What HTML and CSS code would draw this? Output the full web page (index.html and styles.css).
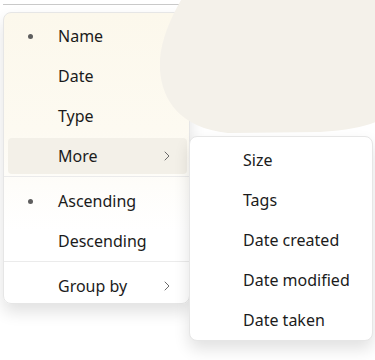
FILE: index.html
```html
<!DOCTYPE html>
<html lang="en">
<head>
    <meta charset="UTF-8">
    <meta name="viewport" content="width=device-width, initial-scale=1.0">
    <title>Sort menu</title>
    <link rel="stylesheet" href="styles.css">
</head>
<body>
    <div class="stage">
        <div class="top-rule"></div>

        <div class="menu main-menu">
            <div class="item"><span class="dot"></span><span class="label">Name</span></div>
            <div class="item"><span class="label">Date</span></div>
            <div class="item"><span class="label">Type</span></div>
            <div class="item hover">
                <span class="label">More</span>
                <svg class="chevron" width="6" height="10" viewBox="0 0 6 10"><path d="M1 1 L5 5 L1 9" fill="none" stroke="#6b6b6b" stroke-width="1" stroke-linecap="round" stroke-linejoin="round"/></svg>
            </div>
            <div class="sep"></div>
            <div class="item"><span class="dot"></span><span class="label">Ascending</span></div>
            <div class="item"><span class="label">Descending</span></div>
            <div class="sep"></div>
            <div class="item">
                <span class="label">Group by</span>
                <svg class="chevron" width="6" height="10" viewBox="0 0 6 10"><path d="M1 1 L5 5 L1 9" fill="none" stroke="#6b6b6b" stroke-width="1" stroke-linecap="round" stroke-linejoin="round"/></svg>
            </div>
        </div>

        <svg class="blob" width="220" height="140" viewBox="160 0 220 140">
            <path d="M184 -5 C170 18 158 46 160 70 C162 100 180 128 228 133 L320 132 C350 130 368 126 380 120 L380 -5 Z" fill="#f4f1ea"/>
        </svg>

        <div class="menu sub-menu">
            <div class="item"><span class="label">Size</span></div>
            <div class="item"><span class="label">Tags</span></div>
            <div class="item"><span class="label">Date created</span></div>
            <div class="item"><span class="label">Date modified</span></div>
            <div class="item"><span class="label">Date taken</span></div>
        </div>
    </div>
</body>
</html>
```

FILE: styles.css
```css
body, html {
    margin: 0;
    padding: 0;
    width: 100%;
    height: 100%;
    background: #ffffff;
    font-family: 'Noto Sans', 'Open Sans', sans-serif;
    color: #1b1b1b;
    overflow: hidden;
}

.stage {
    position: relative;
    width: 375px;
    height: 360px;
}

.top-rule {
    position: absolute;
    left: 3px;
    top: 4px;
    width: 180px;
    height: 1px;
    background: #c9c9c9;
}

.menu {
    position: absolute;
    box-sizing: border-box;
    display: flex;
    flex-direction: column;
    background: #ffffff;
    border: 1px solid #e6e6e6;
    border-radius: 8px;
    padding: 3px 0 0;
    box-shadow: 0 8px 16px rgba(0, 0, 0, 0.12);
}

.main-menu {
    left: 3px;
    top: 12px;
    width: 187px;
    height: 292px;
    background: linear-gradient(180deg, #fcf8ec 0%, #fdfaf1 40%, #fefdfa 60%, #ffffff 75%);
}

.sub-menu {
    left: 189px;
    top: 136px;
    width: 184px;
    height: 205px;
    z-index: 3;
}

.item {
    position: relative;
    display: flex;
    align-items: center;
    flex-shrink: 0;
    height: 36px;
    margin: 2px 2px 2px 4px;
    border-radius: 4px;
    font-size: 16px;
}

.main-menu .item .label {
    margin-left: 50px;
}

.sub-menu .item .label {
    margin-left: 49px;
}

.item.hover {
    background: #f3f0e8;
}

.dot {
    position: absolute;
    left: 20px;
    top: 16px;
    width: 5px;
    height: 5px;
    border-radius: 50%;
    background: #5e5e5e;
}

.chevron {
    margin-left: auto;
    margin-right: 17px;
}

.sep {
    flex-shrink: 0;
    height: 1px;
    background: #ebebeb;
    margin: 0 0 4px;
}

.blob {
    position: absolute;
    left: 160px;
    top: 0;
    z-index: 2;
}
```
